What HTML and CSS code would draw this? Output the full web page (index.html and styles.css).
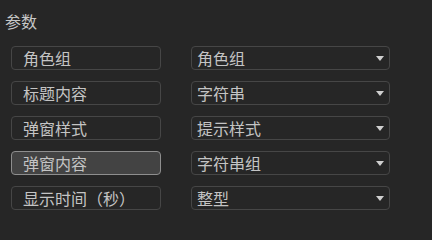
FILE: index.html
```html
<!DOCTYPE html>
<html lang="zh-CN">
<head>
<meta charset="utf-8">
<title>参数</title>
<link rel="stylesheet" href="styles.css">
</head>
<body>
<div class="panel">
  <div class="title">参数</div>
  <div class="grid">
    <div class="label">角色组</div>
    <div class="select"><span>角色组</span><svg class="arrow" width="8" height="5" viewBox="0 0 8 5"><path d="M0 0H8L4 5Z"/></svg></div>
    <div class="label">标题内容</div>
    <div class="select"><span>字符串</span><svg class="arrow" width="8" height="5" viewBox="0 0 8 5"><path d="M0 0H8L4 5Z"/></svg></div>
    <div class="label">弹窗样式</div>
    <div class="select"><span>提示样式</span><svg class="arrow" width="8" height="5" viewBox="0 0 8 5"><path d="M0 0H8L4 5Z"/></svg></div>
    <div class="label active">弹窗内容</div>
    <div class="select"><span>字符串组</span><svg class="arrow" width="8" height="5" viewBox="0 0 8 5"><path d="M0 0H8L4 5Z"/></svg></div>
    <div class="label">显示时间（秒）</div>
    <div class="select"><span>整型</span><svg class="arrow" width="8" height="5" viewBox="0 0 8 5"><path d="M0 0H8L4 5Z"/></svg></div>
  </div>
</div>
</body>
</html>
```
FILE: styles.css
```css
html, body {
  margin: 0;
  padding: 0;
  background: #262626;
}
body {
  font-family: "Noto Sans CJK SC", "Noto Sans", sans-serif;
  color: #c4c4c4;
  width: 432px;
  height: 218px;
  overflow: hidden;
}
.panel {
  padding: 11px 0 0 5px;
}
.title {
  font-size: 16px;
  line-height: 20px;
  height: 20px;
  color: #c8c8c8;
}
.grid {
  margin-top: 15px;
  margin-left: 6px;
  display: grid;
  grid-template-columns: 150px 199px;
  column-gap: 30px;
  row-gap: 11px;
}
.label, .select {
  box-sizing: border-box;
  height: 24px;
  border: 1px solid #464646;
  border-radius: 4px;
  font-size: 16px;
  line-height: 20px;
  display: flex;
  align-items: center;
  white-space: nowrap;
}
.label {
  padding-left: 11px;
  padding-bottom: 1px;
}
.label.active {
  background: #434343;
  border-color: #8e8e8e;
}
.select {
  padding: 0 5px 1px 5px;
  justify-content: space-between;
}
.arrow {
  fill: #d0d0d0;
  margin-top: 1px;
}
```
